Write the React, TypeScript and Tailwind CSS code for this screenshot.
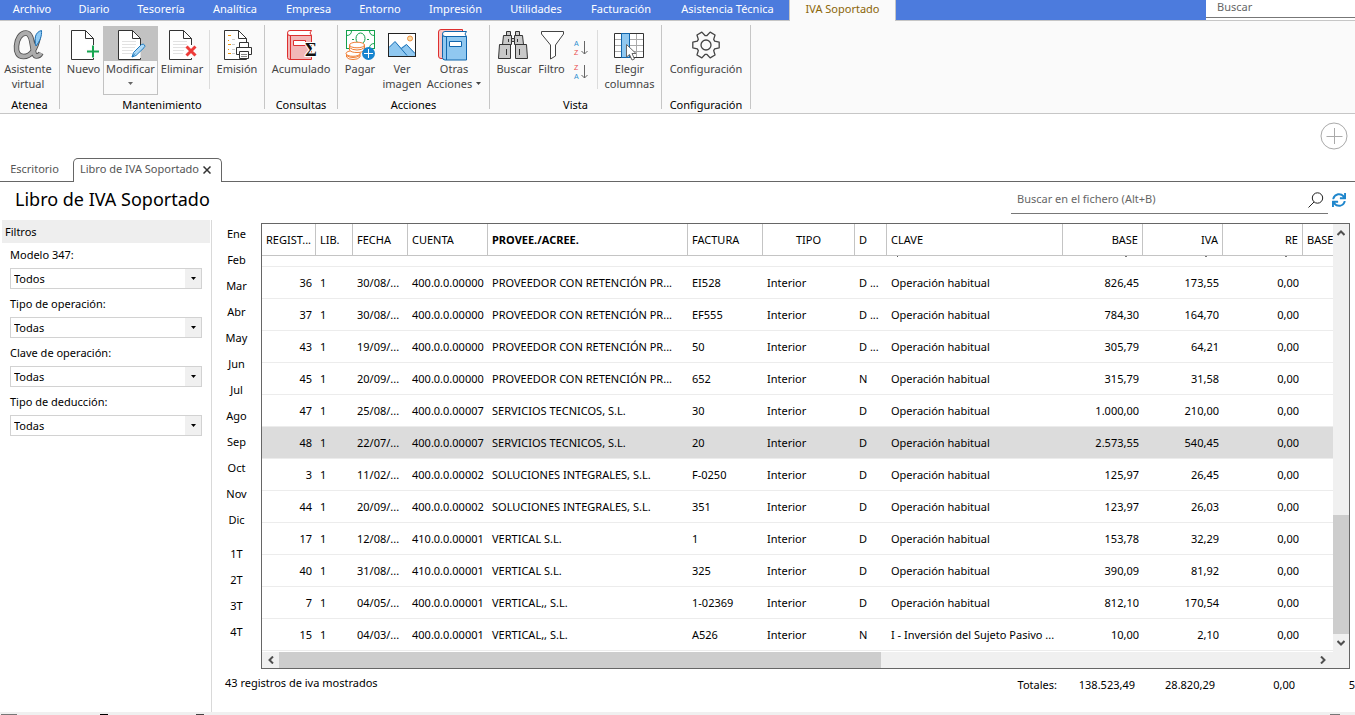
import { useState, type ReactNode } from 'react';
import { FaSync } from 'react-icons/fa';

const menu = [
  { label: 'Archivo', width: 'w-16' },
  { label: 'Diario', width: 'w-[60px]' },
  { label: 'Tesorería', width: 'w-[74px]' },
  { label: 'Analítica', width: 'w-[74px]' },
  { label: 'Empresa', width: 'w-[73px]' },
  { label: 'Entorno', width: 'w-[70px]' },
  { label: 'Impresión', width: 'w-[81px]' },
  { label: 'Utilidades', width: 'w-20' },
  { label: 'Facturación', width: 'w-[90px]' },
  { label: 'Asistencia Técnica', width: 'w-[123px]' },
];

const filters = [
  { id: 'modelo', label: 'Modelo 347:', value: 'Todos' },
  { id: 'tipo-operacion', label: 'Tipo de operación:', value: 'Todas' },
  { id: 'clave', label: 'Clave de operación:', value: 'Todas' },
  { id: 'tipo-deduccion', label: 'Tipo de deducción:', value: 'Todas' },
];

const months = ['Ene', 'Feb', 'Mar', 'Abr', 'May', 'Jun', 'Jul', 'Ago', 'Sep', 'Oct', 'Nov', 'Dic'];
const quarters = ['1T', '2T', '3T', '4T'];

const columns = [
  { label: 'REGIST...', width: 'w-[54px]', head: 'text-left font-normal', cell: 'text-right' },
  { label: 'LIB.', width: 'w-[37px]', head: 'text-left font-normal', cell: 'text-left' },
  { label: 'FECHA', width: 'w-[55px]', head: 'text-left font-normal', cell: 'text-left' },
  { label: 'CUENTA', width: 'w-20', head: 'text-left font-normal', cell: 'text-left' },
  { label: 'PROVEE./ACREE.', width: 'w-[200px]', head: 'text-left font-bold', cell: 'text-left' },
  { label: 'FACTURA', width: 'w-[75px]', head: 'text-left font-normal', cell: 'text-left' },
  { label: 'TIPO', width: 'w-[92px]', head: 'text-center font-normal', cell: 'text-left' },
  { label: 'D', width: 'w-8', head: 'text-left font-normal', cell: 'text-left' },
  { label: 'CLAVE', width: 'w-[176px]', head: 'text-left font-normal', cell: 'text-left' },
  { label: 'BASE', width: 'w-20', head: 'text-right font-normal', cell: 'text-right' },
  { label: 'IVA', width: 'w-20', head: 'text-right font-normal', cell: 'text-right' },
  { label: 'RE', width: 'w-20', head: 'text-right font-normal', cell: 'text-right' },
];

const PROV = 'PROVEEDOR CON RETENCIÓN PR...';
const HAB = 'Operación habitual';

const rows = [
  ['36', '1', '30/08/...', '400.0.0.00000', PROV, 'EI528', 'Interior', 'D ...', HAB, '826,45', '173,55', '0,00'],
  ['37', '1', '30/08/...', '400.0.0.00000', PROV, 'EF555', 'Interior', 'D ...', HAB, '784,30', '164,70', '0,00'],
  ['43', '1', '19/09/...', '400.0.0.00000', PROV, '50', 'Interior', 'D ...', HAB, '305,79', '64,21', '0,00'],
  ['45', '1', '20/09/...', '400.0.0.00000', PROV, '652', 'Interior', 'N', HAB, '315,79', '31,58', '0,00'],
  ['47', '1', '25/08/...', '400.0.0.00007', 'SERVICIOS TECNICOS, S.L.', '30', 'Interior', 'D', HAB, '1.000,00', '210,00', '0,00'],
  ['48', '1', '22/07/...', '400.0.0.00007', 'SERVICIOS TECNICOS, S.L.', '20', 'Interior', 'D', HAB, '2.573,55', '540,45', '0,00'],
  ['3', '1', '11/02/...', '400.0.0.00002', 'SOLUCIONES INTEGRALES, S.L.', 'F-0250', 'Interior', 'D', HAB, '125,97', '26,45', '0,00'],
  ['44', '1', '20/09/...', '400.0.0.00002', 'SOLUCIONES INTEGRALES, S.L.', '351', 'Interior', 'D', HAB, '123,97', '26,03', '0,00'],
  ['17', '1', '12/08/...', '410.0.0.00001', 'VERTICAL S.L.', '1', 'Interior', 'D', HAB, '153,78', '32,29', '0,00'],
  ['40', '1', '31/08/...', '410.0.0.00001', 'VERTICAL S.L.', '325', 'Interior', 'D', HAB, '390,09', '81,92', '0,00'],
  ['7', '1', '04/05/...', '400.0.0.00001', 'VERTICAL,, S.L.', '1-02369', 'Interior', 'D', HAB, '812,10', '170,54', '0,00'],
  ['15', '1', '04/03/...', '400.0.0.00001', 'VERTICAL,, S.L.', 'A526', 'Interior', 'N', 'I - Inversión del Sujeto Pasivo ...', '10,00', '2,10', '0,00'],
];

function Icon({ children }: { children: ReactNode }) {
  return (
    <svg viewBox="0 0 32 32" className="size-8 shrink-0 overflow-visible" fill="none" aria-hidden="true">
      {children}
    </svg>
  );
}

function Sheet({ lines, children }: { lines?: boolean; children: ReactNode }) {
  return (
    <Icon>
      <path d="M3.5 2.5H17.5L25.5 10.5V31.5H3.5Z" fill="#fff" />
      <path d="M25.5 17V10.5L17.5 2.5H3.5V31.5H25.5V30M17.5 2.5V10.5H25.5" stroke="#333" />
      {lines && <path d="M7 13.5H21M7 16.5H21M7 19.5H20M7 22.5H18M7 25.5H17" stroke="#e2e2e2" />}
      {children}
    </Icon>
  );
}

function AssistantIcon() {
  const loop = 'M26.5 8C24 21 18.5 28.5 11.5 28.5C6 28.5 4 24 4.5 18C5 11 8.5 5 14 5C22.5 5 19 28 24.5 28C26.5 28 28 27 29 25';
  return (
    <Icon>
      <path d={loop} stroke="#4f4f4f" strokeWidth="5.5" />
      <path d={loop} stroke="#acacac" strokeWidth="3.8" />
      <path d="M24 18C22 11 23 4 29.5 2.5C30 8 28 13 24 18Z" fill="#8fcbf5" stroke="#1a6fb5" />
    </Icon>
  );
}

function NewIcon() {
  return (
    <Sheet>
      <path d="M25 17V30M18.5 23.5H31.5" stroke="#fafafa" strokeWidth="4" />
      <path d="M25 17.5V29.5M19 23.5H31" stroke="#16a650" strokeWidth="2" />
    </Sheet>
  );
}

function EditIcon() {
  return (
    <Sheet lines>
      <path d="M17 29L18.5 24.5L26.5 16.5Q28.5 15.5 29.5 17Q30.5 18.5 29 19.7L21 27.5Z" fill="#aed9f7" stroke="#1f7cc0" />
      <path d="M17 29L20 25.5" stroke="#1f7cc0" />
    </Sheet>
  );
}

function DeleteIcon() {
  return (
    <Sheet lines>
      <path d="M20.5 18.5L29.5 27.5M29.5 18.5L20.5 27.5" stroke="#fafafa" strokeWidth="5" />
      <path d="M20.5 18.5L29.5 27.5M29.5 18.5L20.5 27.5" stroke="#ee3b38" strokeWidth="3" />
    </Sheet>
  );
}

function PrintIcon() {
  return (
    <Sheet>
      <path d="M7 7.5H10M7 12.5H8M7 16.5H10M7 21.5H8M7 25.5H10" stroke="#f0960a" />
      <path d="M11 11.5H14M11 16.5H14M11 21.5H14M11 25.5H14" stroke="#ccc" />
      <path d="M18.5 19.5V14.5H27.5V19.5M18.5 26.5H15.5V19.5H30.5V26.5H27.5" fill="#fff" stroke="#333" />
      <path d="M18.5 23.5H27.5V30.5H18.5Z" fill="#fff" stroke="#333" />
      <path d="M20 26.5H26M20 28.5H26" stroke="#888" />
    </Sheet>
  );
}

function SumIcon() {
  return (
    <Icon>
      <path d="M2.5 5V29.5Q2.5 31.5 5 31.5H26.5V7.5H5Q2.5 7.5 2.5 5" fill="#f2b7b7" stroke="#de2f2f" />
      <path d="M26.5 7.5H5Q2.5 7.5 2.5 5Q2.5 2.5 5 2.5H26.5L25 5Z" fill="#fff" stroke="#de2f2f" />
      <path d="M5.5 8V31" stroke="#de2f2f" />
      <path d="M8.5 12.5H20.5V17.5H8.5Z" fill="#fff" stroke="#de2f2f" />
      <text
        x="20"
        y="28"
        fontSize="18"
        fontWeight="700"
        fontFamily="Liberation Serif, serif"
        fill="#111"
        stroke="#fff"
        strokeWidth="2"
        paintOrder="stroke"
      >
        Σ
      </text>
    </Icon>
  );
}

function PayIcon() {
  return (
    <Icon>
      <rect x="2.5" y="2.5" width="28" height="18" fill="#fff" stroke="#12a04b" />
      <path d="M2.5 7.5Q7.5 7.5 7.5 2.5M25.5 2.5Q25.5 7.5 30.5 7.5M25.5 20.5Q25.5 15.5 30.5 15.5" stroke="#12a04b" />
      <ellipse cx="16.5" cy="10.5" rx="4.5" ry="5.5" stroke="#12a04b" />
      <path d="M8 11.5H10M23 11.5H25" stroke="#12a04b" />
      <path d="M2.5 25V29Q4 31.5 9 31.5T16 29V25" fill="#fff" stroke="#ef7d33" />
      <ellipse cx="9" cy="25.5" rx="7" ry="2.8" fill="#fff" stroke="#ef7d33" />
      <path d="M5.5 17V22Q7 24.5 13 24.5T20.5 22V17" fill="#fff" stroke="#ef7d33" />
      <path d="M5.5 19.5Q8 22 13 22T20.5 19.5M2.5 27.5Q5 29.5 9 29.5T16 27.5" stroke="#ef7d33" />
      <ellipse cx="13" cy="17" rx="7.5" ry="2.8" fill="#fff" stroke="#ef7d33" />
      <circle cx="24.5" cy="25.5" r="6.5" fill="#1784cf" />
      <path d="M24.5 21V30M20 25.5H29" stroke="#fff" />
    </Icon>
  );
}

function PictureIcon() {
  return (
    <Icon>
      <rect x="2.5" y="5.5" width="27" height="23" fill="#fff" />
      <path d="M3 19L9 13.5L15 19.5L20.5 16L29 25V28H3Z" fill="#90c8f0" />
      <path d="M3 19.5L9 13.5L21 27.5M15.5 20.5L20.5 16.5L29 25.5" stroke="#1a6fb5" />
      <circle cx="24" cy="10.5" r="2.5" fill="#fbd9a0" stroke="#ee9040" />
      <rect x="2.5" y="5.5" width="27" height="23" stroke="#222" />
    </Icon>
  );
}

function BooksIcon() {
  return (
    <Icon>
      <path d="M24.5 4V1.5H3Q.5 1.5 .5 4V28Q.5 30.5 3 30.5H5" fill="#f7c5c5" stroke="#de2f2f" />
      <path d="M4.5 6V29.5Q4.5 32 7 32H28.5V8.5H7Q4.5 8.5 4.5 6" fill="#90c8f0" stroke="#1166ad" />
      <path d="M28.5 8.5H7Q4.5 8.5 4.5 6Q4.5 3.5 7 3.5H28.5L27 6Z" fill="#fff" stroke="#1166ad" />
      <path d="M8.5 9V32" stroke="#1166ad" />
      <path d="M11.5 13.5H23.5V18.5H11.5Z" fill="#fff" stroke="#1166ad" />
    </Icon>
  );
}

function BinocularsIcon() {
  return (
    <Icon>
      <g fill="#c9c9c9" stroke="#333">
        <path d="M8.5 3.5H12.5V7.5H8.5ZM17.5 3.5H21.5V7.5H17.5Z" />
        <path d="M5.5 7.5H13.5V16.5H4.5ZM16.5 7.5H24.5L25.5 16.5H16.5Z" />
        <path d="M13.5 10.5H16.5V13.5H13.5Z" />
        <path d="M1.5 16.5H12.5V30.5H.5ZM17.5 16.5H28.5L29.5 30.5H17.5Z" />
        <path d="M10.5 11V14M19.5 11V14M8.5 21V27M21.5 21V27" />
      </g>
    </Icon>
  );
}

function FunnelIcon() {
  return (
    <Icon>
      <path
        d="M5.5 3.5H27.5V6L19.5 17V28L14.5 31V17L5.5 6Z"
        fill="#fff"
        stroke="#444"
        strokeLinejoin="round"
      />
    </Icon>
  );
}

function SortIcon({ desc }: { desc?: boolean }) {
  return (
    <svg viewBox="0 0 16 16" className="size-4 overflow-visible" aria-hidden="true">
      <g fontFamily="Liberation Sans, sans-serif" fontSize="7">
        <text x="1" y="6" fill={desc ? '#e8494c' : '#2c8fd0'}>
          {desc ? 'Z' : 'A'}
        </text>
        <text x="1" y="15" fill={desc ? '#2c8fd0' : '#e8494c'}>
          {desc ? 'A' : 'Z'}
        </text>
      </g>
      <path d="M11.5 1V14M8.5 11L11.5 14L14.5 11" fill="none" stroke="#666" />
    </svg>
  );
}

function ColumnsIcon() {
  return (
    <Icon>
      <path d="M.5 5.5H29.5V29.5H.5Z" fill="#fff" />
      <path d="M1 11.5H29M1 17.5H29M1 23.5H29M22.5 6V29" stroke="#aaa" />
      <path d="M.5 5.5H29.5V29.5H.5Z" stroke="#333" />
      <path d="M7.5 5.5H15.5V29.5H7.5Z" fill="#90c8f0" stroke="#1166ad" />
      <path d="M12.5 16.5V29L15.5 26.5L18 32L20.5 31L18 25.5H22Z" fill="#fff" stroke="#666" />
    </Icon>
  );
}

const gear = Array.from({ length: 6 }, (_, k) =>
  [
    [-24, 9.5],
    [-12, 13.5],
    [12, 13.5],
    [24, 9.5],
  ].map(([deg, r]) => {
    const a = ((k * 60 + deg) * Math.PI) / 180;
    return `${(16 + r * Math.cos(a)).toFixed(2)},${(17 + r * Math.sin(a)).toFixed(2)}`;
  }),
)
  .flat()
  .join(' ');

function GearIcon() {
  return (
    <Icon>
      <polygon points={gear} fill="#fafafa" stroke="#444" strokeWidth="1.3" strokeLinejoin="round" />
      <circle cx="16" cy="17" r="5" stroke="#444" strokeWidth="1.3" />
    </Icon>
  );
}

function Caret() {
  return (
    <svg viewBox="0 0 5 3" className="h-[3px] w-[5px]" fill="currentColor" aria-hidden="true">
      <path d="M0 0H5L2.5 3Z" />
    </svg>
  );
}

function Chevron({ turn = '' }: { turn?: string }) {
  return (
    <svg viewBox="0 0 8 8" className={`size-2 ${turn}`} fill="none" stroke="#505050" strokeWidth="2" aria-hidden="true">
      <path d="M.5 6L4 2.5L7.5 6" />
    </svg>
  );
}

function Tool({ icon, width, lines }: { icon: ReactNode; width: string; lines: ReactNode[] }) {
  return (
    <button type="button" className={`flex shrink-0 flex-col items-center text-[#444] ${width}`}>
      <span className="flex h-9 items-center pt-0.5">{icon}</span>
      {lines.map((line, i) => (
        <span key={i} className="flex h-[15px] items-center gap-1 leading-[15px]">
          {line}
        </span>
      ))}
    </button>
  );
}

function Group({ title, width, children }: { title: string; width: string; children: ReactNode }) {
  return (
    <section aria-label={title} className={`flex shrink-0 flex-col border-r border-[#c6c6c6] ${width}`}>
      <div className="flex h-[72px]">{children}</div>
      <h2 className="-mb-1 text-center leading-4">{title}</h2>
    </section>
  );
}

function Divider() {
  return <span className="mt-[5px] h-[59px] w-px bg-[#dcdcdc]" />;
}

function Ribbon() {
  return (
    <div className="flex h-[93px] border-b border-[#c6c6c6] bg-[#fafafa] pt-1 pb-1">
      <Group title="Atenea" width="w-[60px]">
        <Tool icon={<AssistantIcon />} width="w-14" lines={['Asistente', 'virtual']} />
      </Group>
      <Group title="Mantenimiento" width="w-[205px]">
        <Tool icon={<NewIcon />} width="ml-1 w-[39px]" lines={['Nuevo']} />
        <button
          type="button"
          className="mt-px flex h-[69px] w-[55px] shrink-0 flex-col items-center border border-[#c2c2c2] text-[#444]"
        >
          <span className="-mt-px flex h-[35px] w-[55px] items-center justify-center bg-[#c2c2c2]">
            <EditIcon />
          </span>
          <span className="leading-[15px]">Modificar</span>
          <span className="flex h-[15px] items-center text-[#666]">
            <Caret />
          </span>
        </button>
        <Tool icon={<DeleteIcon />} width="w-12" lines={['Eliminar']} />
        <span className="w-[3px]" />
        <Divider />
        <Tool icon={<PrintIcon />} width="w-[54px]" lines={['Emisión']} />
      </Group>
      <Group title="Consultas" width="w-[73px]">
        <Tool icon={<SumIcon />} width="w-[72px]" lines={['Acumulado']} />
      </Group>
      <Group title="Acciones" width="w-[152px]">
        <Tool icon={<PayIcon />} width="w-11" lines={['Pagar']} />
        <Tool icon={<PictureIcon />} width="w-10" lines={['Ver', 'imagen']} />
        <Tool
          icon={<BooksIcon />}
          width="w-16"
          lines={[
            'Otras',
            <>
              Acciones <Caret />
            </>,
          ]}
        />
      </Group>
      <Group title="Vista" width="w-[172px]">
        <Tool icon={<BinocularsIcon />} width="w-12" lines={['Buscar']} />
        <Tool icon={<FunnelIcon />} width="w-[27px]" lines={['Filtro']} />
        <div className="flex w-8 shrink-0 flex-col items-center gap-2 pt-[15px]">
          <button type="button" aria-label="Orden ascendente">
            <SortIcon />
          </button>
          <button type="button" aria-label="Orden descendente">
            <SortIcon desc />
          </button>
        </div>
        <Divider />
        <Tool icon={<ColumnsIcon />} width="w-[63px]" lines={['Elegir', 'columnas']} />
      </Group>
      <Group title="Configuración" width="w-[89px]">
        <Tool icon={<GearIcon />} width="w-[88px]" lines={['Configuración']} />
      </Group>
    </div>
  );
}

function Filters() {
  return (
    <aside className="w-[212px] shrink-0 border-r border-[#d9d9d9] pl-0.5">
      <h2 className="mr-px bg-[#eee] pl-[3px] leading-[23px]">Filtros</h2>
      <div className="mt-1 flex flex-col gap-[7px] pr-[9px] pl-2">
        {filters.map((f) => (
          <div key={f.id} className="flex flex-col gap-[5px]">
            <label htmlFor={f.id} className="leading-4">
              {f.label}
            </label>
            <div className="relative">
              <select
                id={f.id}
                className="block h-[21px] w-full appearance-none border border-[#d2d2d2] bg-white pl-[3px] leading-[19px]"
              >
                <option>{f.value}</option>
              </select>
              <span className="pointer-events-none absolute inset-y-px right-px flex w-4 items-center justify-center bg-[#f0f0f0]">
                <Caret />
              </span>
            </div>
          </div>
        ))}
      </div>
    </aside>
  );
}

function Periods() {
  return (
    <nav aria-label="Periodos" className="flex w-[49px] shrink-0 flex-col pt-px">
      {months.map((m) => (
        <button key={m} type="button" className="h-[26px]">
          {m}
        </button>
      ))}
      <div className="mt-2 flex flex-col">
        {quarters.map((q) => (
          <button key={q} type="button" className="h-[26px]">
            {q}
          </button>
        ))}
      </div>
    </nav>
  );
}

function Records() {
  const [selected, setSelected] = useState('48');

  return (
    <div className="mt-[3px] mr-[5px] border border-[#666]">
      <div className="flex">
        <div className="min-w-0 flex-1 overflow-hidden pb-px">
          <table className="w-full table-fixed border-separate border-spacing-0 whitespace-nowrap">
            <thead>
              <tr className="h-8">
                {columns.map((c) => (
                  <th
                    key={c.label}
                    className={`border-r border-b border-[#c4c4c4] px-1 pt-0.5 ${c.width} ${c.head}`}
                  >
                    {c.label}
                  </th>
                ))}
                <th className="overflow-hidden border-b border-[#c4c4c4] pt-0.5 pl-1 text-left font-normal">BASE</th>
              </tr>
            </thead>
            <tbody>
              {/* the row scrolled under the header: only its descenders stick out */}
              <tr className="h-[11px]">
                {columns.map((c, i) => (
                  <td key={c.label} className="border-b border-[#ececec] p-0 align-top">
                    {i === 8 && <span className="ml-2.5 block h-px w-px bg-[#555]" />}
                    {i > 8 && <span className="mr-4 ml-auto block h-px w-0.5 bg-[#777]" />}
                  </td>
                ))}
                <td className="border-b border-[#ececec] p-0" />
              </tr>
              {rows.map((row) => (
                <tr
                  key={row[0]}
                  onClick={() => setSelected(row[0])}
                  className={row[0] === selected ? 'h-8 bg-[#dcdcdc]' : 'h-8'}
                >
                  {row.map((value, i) => (
                    <td key={i} className={`border-b border-[#ececec] px-1 pt-0.5 pb-0 ${columns[i].cell}`}>
                      {value}
                    </td>
                  ))}
                  <td className="border-b border-[#ececec]" />
                </tr>
              ))}
            </tbody>
          </table>
        </div>
        <div className="flex w-4 shrink-0 flex-col items-center bg-[#f0f0f0]">
          <span className="flex h-[18px] items-center">
            <Chevron />
          </span>
          <span className="flex-1" />
          <span className="h-[119px] w-full bg-[#cdcdcd]" />
          <span className="flex h-[18px] items-center">
            <Chevron turn="rotate-180" />
          </span>
        </div>
      </div>
      <div className="flex h-4 items-center bg-[#f0f0f0] pr-[22px]">
        <span className="flex w-[17px] justify-center">
          <Chevron turn="-rotate-90" />
        </span>
        <span className="h-4 w-[602px] bg-[#cdcdcd]" />
        <span className="flex-1" />
        <Chevron turn="rotate-90" />
      </div>
    </div>
  );
}

export default function App() {
  return (
    <div className="flex min-h-screen flex-col overflow-hidden bg-white font-['Noto_Sans',sans-serif] text-[11px] text-black">
      <header>
        <nav className="flex h-[21px] bg-[#4c7bdd]">
          {menu.map((m) => (
            <button
              key={m.label}
              type="button"
              className={`h-full shrink-0 border-b border-[#c6c6c6] pb-0.5 whitespace-nowrap text-white ${m.width}`}
            >
              {m.label}
            </button>
          ))}
          <button
            type="button"
            className="h-full w-[107px] shrink-0 border-x border-[#c6c6c6] bg-[#fafafa] pb-[3px] text-[#8a6508]"
          >
            IVA Soportado
          </button>
          <span className="flex-1 border-b border-[#c6c6c6]" />
          <div className="w-[149px] shrink-0 border-b border-[#c6c6c6] bg-white">
            <input
              type="text"
              aria-label="Buscar"
              placeholder="Buscar"
              className="block h-[18px] w-full border-b border-[#777] pb-[5px] pl-[11px] outline-none placeholder:text-[#666]"
            />
          </div>
        </nav>
        <Ribbon />
      </header>

      <div className="flex h-11 items-center justify-end pr-[7px]">
        <button type="button" aria-label="Añadir" className="text-[#aaa]">
          <svg viewBox="0 0 28 28" className="size-7" fill="none" stroke="currentColor" aria-hidden="true">
            <circle cx="14" cy="14" r="13" />
            <path d="M14.5 6V22M6.5 14.5H22.5" />
          </svg>
        </button>
      </div>

      <div className="flex h-6 text-[#555]">
        <button type="button" className="w-[73px] border-b border-[#666] pr-1">
          Escritorio
        </button>
        <button
          type="button"
          className="flex w-[149px] items-center justify-center gap-1 rounded-t-[5px] border border-b-0 border-[#666] pr-1 pb-0.5 whitespace-nowrap"
        >
          Libro de IVA Soportado
          <svg viewBox="0 0 8 8" className="size-2" stroke="#333" strokeWidth="1.5" aria-hidden="true">
            <path d="M.5 .5L7.5 7.5M7.5 .5L.5 7.5" />
          </svg>
        </button>
        <span className="flex-1 border-b border-[#666]" />
      </div>

      <div className="flex h-[38px] items-start justify-between pr-[9px]">
        <h1 className="pl-[15px] text-lg leading-[34px]">Libro de IVA Soportado</h1>
        <div className="flex items-center gap-1 pt-1">
          <div className="flex h-7 w-[317px] items-center border-b border-[#777] pr-1">
            <input
              type="text"
              aria-label="Buscar en el fichero"
              placeholder="Buscar en el fichero (Alt+B)"
              className="min-w-0 flex-1 pl-1.5 outline-none placeholder:text-[#666]"
            />
            <svg viewBox="0 0 16 16" className="size-4" fill="none" stroke="#222" aria-hidden="true">
              <circle cx="9.5" cy="6" r="5.2" />
              <path d="M6 10L.5 15.5" />
            </svg>
          </div>
          <button type="button" aria-label="Actualizar" className="text-[#1e86cc]">
            <FaSync className="size-3.5" />
          </button>
        </div>
      </div>

      <main className="flex flex-1">
        <Filters />
        <Periods />
        <div className="flex min-w-0 flex-1 flex-col">
          <Records />
          <footer className="-ml-9 flex h-[42px] justify-between pt-1.5">
            <p className="leading-4">43 registros de iva mostrados</p>
            <dl className="flex pt-0.5 leading-4">
              <dt>Totales:</dt>
              <dd className="w-[78px] text-right">138.523,49</dd>
              <dd className="w-20 text-right">28.820,29</dd>
              <dd className="w-20 text-right">0,00</dd>
              <dd className="w-[60px] text-right">5</dd>
            </dl>
          </footer>
        </div>
      </main>
      <div className="flex h-[3px] items-end bg-[#f0f0f0]">
        <span className="ml-px h-px w-4 bg-[#777]" />
        <span className="ml-[83px] h-px w-2 bg-black" />
        <span className="ml-[88px] h-px w-2 bg-[#444]" />
        <span className="mr-[15px] ml-auto h-px w-2.5 bg-[#777]" />
      </div>
    </div>
  );
}
